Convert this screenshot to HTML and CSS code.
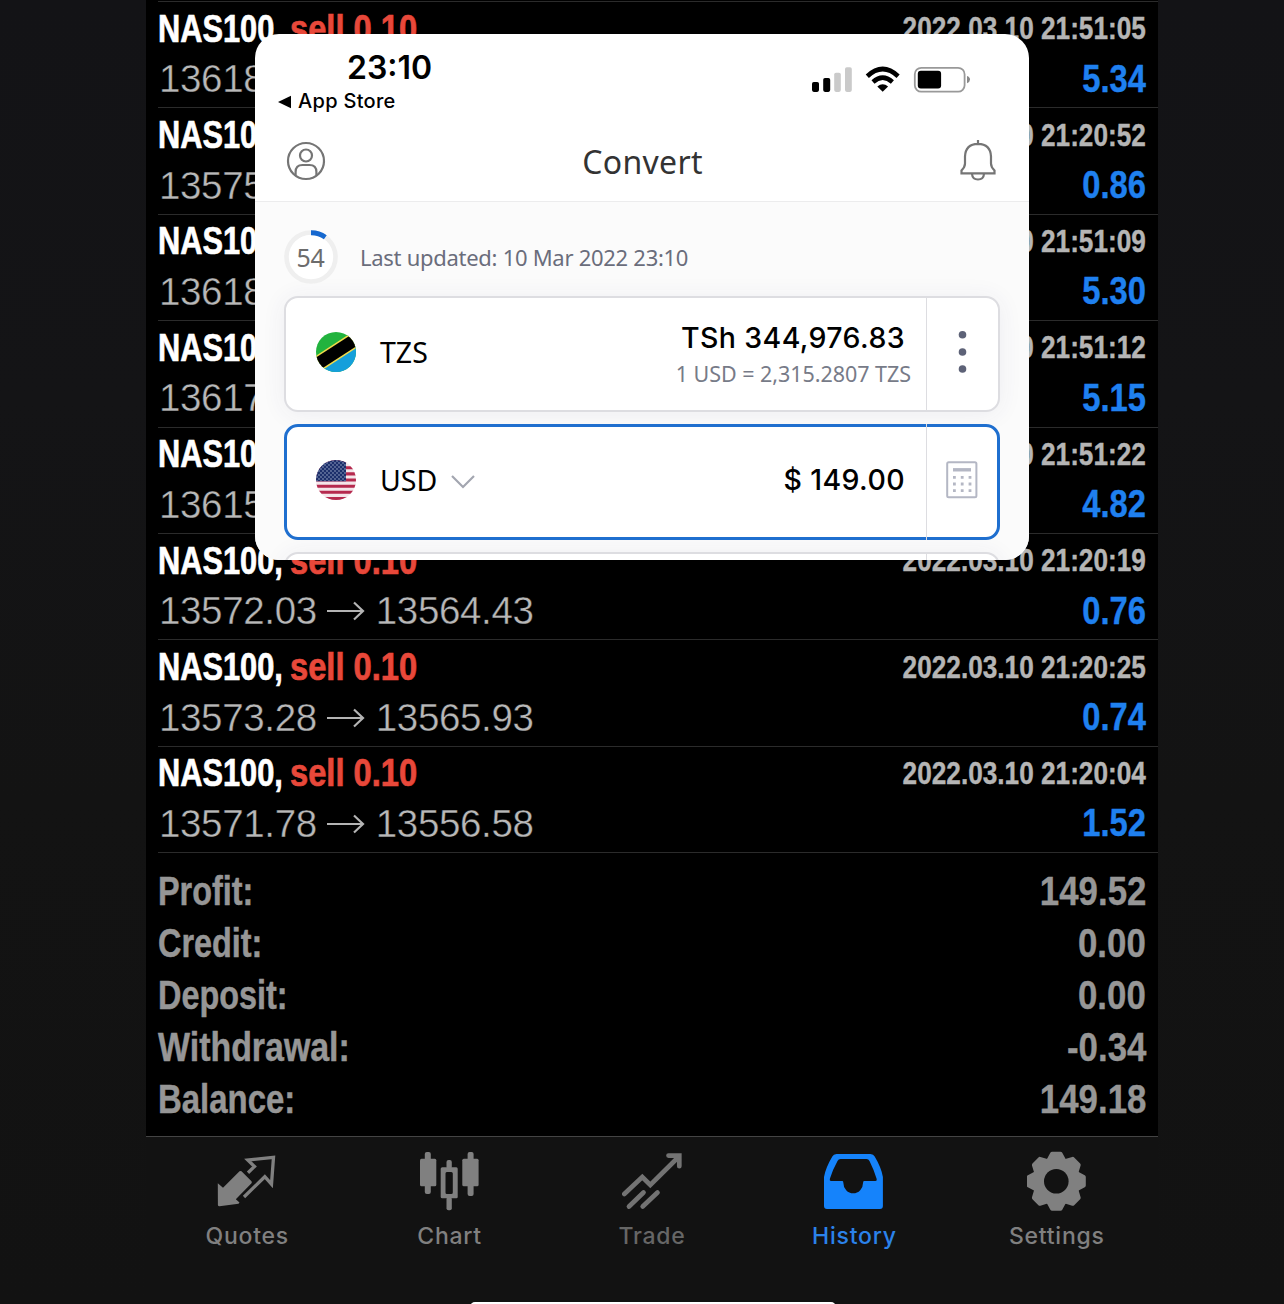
FILE: index.html
```html
<!DOCTYPE html>
<html lang="en">
<head>
<meta charset="utf-8">
<title>History</title>
<link rel="stylesheet" href="styles.css">
</head>
<body>
<svg width="0" height="0" class="defs">
  <symbol id="arrow" viewBox="0 0 38 20"><path d="M0 10H36M27 1.500L36 10L27 18.500" fill="none" stroke="#b4b4b4" stroke-width="2.200"/></symbol>
</svg>
<div class="phone">
  <main class="history">
    <div class="deal"><div class="line"><span class="title"><b class="symbol">NAS100,</b><b class="side-sell">sell 0.10</b></span><span class="time">2022.03.10 21:51:05</span></div><div class="line"><span class="price">13618</span><span class="profit">5.34</span></div></div>
    <div class="deal"><div class="line"><span class="title"><b class="symbol">NAS100,</b><b class="side-sell">sell 0.10</b></span><span class="time">2022.03.10 21:20:52</span></div><div class="line"><span class="price">13575</span><span class="profit">0.86</span></div></div>
    <div class="deal"><div class="line"><span class="title"><b class="symbol">NAS100,</b><b class="side-sell">sell 0.10</b></span><span class="time">2022.03.10 21:51:09</span></div><div class="line"><span class="price">13618</span><span class="profit">5.30</span></div></div>
    <div class="deal"><div class="line"><span class="title"><b class="symbol">NAS100,</b><b class="side-sell">sell 0.10</b></span><span class="time">2022.03.10 21:51:12</span></div><div class="line"><span class="price">13617</span><span class="profit">5.15</span></div></div>
    <div class="deal"><div class="line"><span class="title"><b class="symbol">NAS100,</b><b class="side-sell">sell 0.10</b></span><span class="time">2022.03.10 21:51:22</span></div><div class="line"><span class="price">13615</span><span class="profit">4.82</span></div></div>
    <div class="deal"><div class="line"><span class="title"><b class="symbol">NAS100,</b><b class="side-sell">sell 0.10</b></span><span class="time">2022.03.10 21:20:19</span></div><div class="line"><span class="price">13572.03<svg class="arrow"><use href="#arrow"/></svg>13564.43</span><span class="profit">0.76</span></div></div>
    <div class="deal"><div class="line"><span class="title"><b class="symbol">NAS100,</b><b class="side-sell">sell 0.10</b></span><span class="time">2022.03.10 21:20:25</span></div><div class="line"><span class="price">13573.28<svg class="arrow"><use href="#arrow"/></svg>13565.93</span><span class="profit">0.74</span></div></div>
    <div class="deal"><div class="line"><span class="title"><b class="symbol">NAS100,</b><b class="side-sell">sell 0.10</b></span><span class="time">2022.03.10 21:20:04</span></div><div class="line"><span class="price">13571.78<svg class="arrow"><use href="#arrow"/></svg>13556.58</span><span class="profit">1.52</span></div></div>
    <div class="summary">
      <div class="total"><span class="label short">Profit:</span><span class="value">149.52</span></div>
      <div class="total"><span class="label short">Credit:</span><span class="value">0.00</span></div>
      <div class="total"><span class="label short">Deposit:</span><span class="value">0.00</span></div>
      <div class="total"><span class="label long">Withdrawal:</span><span class="value">-0.34</span></div>
      <div class="total"><span class="label">Balance:</span><span class="value">149.18</span></div>
    </div>
  </main>
  <nav class="tabs">
    <div class="tab"><svg class="icon" viewBox="0 0 60 60"><path d="M.8 32.300L6 36.700L22.500 20.300Q23.500 19.500 24.500 20.300L34.500 30.300Q35.200 31.300 34.500 32.200L18.800 48.300L22.500 51.500L21.500 52.800L2.500 55.200Q1 55.200.9 54Z" fill="#808080"/><path d="M31 21.700L37.500 15.500L30.800 9L56.500 6.300L54.500 33.200L47.800 25.700L27 46" fill="none" stroke="#808080" stroke-width="3.300"/></svg><span>Quotes</span></div>
    <div class="tab"><svg class="icon" viewBox=".7 0 60 60" fill="#808080"><rect x=".7" y="7.700" width="16.300" height="27.500" rx="1.500"/><rect x="5.500" y="1" width="6" height="42" rx="2"/><path fill-rule="evenodd" d="M23 16.300H37Q38.400 16.300 38.400 17.800V46Q38.400 47.300 37 47.300H23Q21.400 47.300 21.400 46V17.800Q21.400 16.300 23 16.300ZM27.500 21Q26.200 21 26.200 22.500V41.500Q26.200 43 27.500 43H32Q33.500 43 33.500 41.500V22.500Q33.500 21 32 21Z"/><rect x="27.200" y="9" width="5.300" height="9" rx="2"/><rect x="27.200" y="46" width="5.300" height="13.300" rx="2"/><rect x="43" y="7.700" width="16.300" height="27.500" rx="1.500"/><rect x="48.300" y="1" width="6" height="44" rx="2"/></svg><span>Chart</span></div>
    <div class="tab"><svg class="icon" viewBox="0 0 60 60" fill="none" stroke="#737373" stroke-width="4.700" stroke-linecap="round"><path d="M2.300 43L20.300 26L28.300 34L57 5.500M46.500 4.600H57.300V15.200"/><path d="M7 55.500L21.500 41.500M20.700 55.500L35.500 41.500"/></svg><span class="dim">Trade</span></div>
    <div class="tab"><svg class="icon" viewBox="0 0 60 60"><path fill="#1583fb" fill-rule="evenodd" d="M12.500 3H46.500Q49.500 3 50.700 5.500Q57.500 17 58.900 26V55Q58.900 58 55.900 58H3Q0 58 0 55V26Q1.500 17 8.300 5.500Q9.500 3 12.500 3ZM16.500 8Q14.500 8 13.500 10Q8.500 19 5.800 28Q5.400 30 7 30H18.500Q19.300 30 19.300 31.500A9.900 10.800 0 0 0 39.100 31.500Q39.100 30 40 30H51.500Q53.200 30 52.700 28Q50 19 45.500 10Q44.500 8 42.500 8Z"/></svg><span class="on">History</span></div>
    <div class="tab"><svg class="icon" viewBox="0 0 60 60"><g transform="translate(29.300 30.300)" fill="#808080" stroke="#808080" stroke-width="4" stroke-linejoin="round"><circle r="22"/><path id="t" d="M-8.500-19.500L-4.200-27.500H4.200L8.500-19.500L8.500 19.500L4.200 27.500H-4.200L-8.500 19.500Z"/><use href="#t" transform="rotate(45)"/><use href="#t" transform="rotate(90)"/><use href="#t" transform="rotate(135)"/><circle r="12.300" fill="#121212" stroke="none"/></g></svg><span>Settings</span></div>
  </nav>
  <div class="home"></div>

  <section class="card">
    <header class="status">
      <div class="clock"><div class="hour">23:10</div><div class="back"><svg width="13" height="14" viewBox="0 0 13 14"><path d="M0 7L13 .8V13.200Z"/></svg>App Store</div></div>
      <svg class="signals" width="160" height="28" viewBox="812 66 160 28">
        <g><rect x="812" y="82" width="7" height="9.900" rx="1.800"/><rect x="823.200" y="78" width="7" height="13.900" rx="1.800"/><g fill="#cacaca"><rect x="834.200" y="72.700" width="6.600" height="19.200" rx="1.800"/><rect x="845" y="67.300" width="6.800" height="24.600" rx="1.800"/></g></g>
        <path d="M882.700 91.800L877.300 86.400Q882.700 82.200 888.100 86.400Z"/>
        <g fill="none" stroke="#000" stroke-width="4.600"><path d="M867.300 76.200Q882.700 61.800 898.100 76.200"/><path d="M873 82Q882.700 73.400 892.400 82"/></g>
        <rect x="914.800" y="67.800" width="49.800" height="23.900" rx="6.500" fill="none" stroke="#999" stroke-width="1.800"/><rect x="917.800" y="70.800" width="23.300" height="17.800" rx="3"/><path d="M967 76Q970 77 970 79.500T967 83.200Z" fill="#888"/>
      </svg>
    </header>
    <div class="bar">
      <svg width="40" height="40" viewBox="0 0 40 40" fill="none" stroke="#757575" stroke-width="2.200"><circle cx="20" cy="20" r="18"/><circle cx="20" cy="14.500" r="6"/><path d="M9.600 34.500V31Q9.600 24 16.500 24H23.500Q30.400 24 30.400 31V34.500"/></svg>
      <h1>Convert</h1>
      <svg width="38" height="42" viewBox="0 0 38 42" fill="none" stroke="#757575" stroke-width="2.200"><path d="M19 0V4M2.500 33.400V30.500Q6 27 6 23.500V16.500Q6.500 4 19 3.800Q31.500 4 32 16.500V23.500Q32 27 35.500 30.500V33.400ZM13 34Q13.500 39.500 19 39.500T25 34"/></svg>
    </div>
    <div class="body">
      <div class="updated">
        <svg width="54" height="54" viewBox="0 0 54 54"><circle cx="27" cy="27" r="24.500" fill="#fff" stroke="#efefef" stroke-width="4.600"/><path d="M27 2.800A24.300 24.300 0 0 1 41.300 7.200" fill="none" stroke="#1668cf" stroke-width="5"/><text x="26.500" y="37" class="sec">54</text></svg>
        <span>Last updated: 10 Mar 2022 23:10</span>
      </div>
      <div class="currency">
        <svg class="flag" viewBox="-20 -20 40 40"><clipPath id="c"><circle r="20"/></clipPath><g clip-path="url(#c)"><path d="M-20-20H20V20H-20Z" fill="#22b33e"/><g transform="rotate(-33)"><path d="M-30 0H30V30H-30Z" fill="#159fdb"/><path d="M-30-7.800H30V7.800H-30Z" fill="#f0da4a"/><path d="M-30-6.200H30V6.200H-30Z" fill="#000"/></g></g></svg>
        <span class="code">TZS</span>
        <div class="amounts"><div class="amount">TSh 344,976.83</div><div class="rate">1 USD = 2,315.2807 TZS</div></div>
        <div class="side"><svg width="10" height="42" viewBox="0 0 10 42" fill="#5d6277"><circle cx="4.500" cy="3.800" r="3.800"/><circle cx="4.500" cy="21" r="3.800"/><circle cx="4.500" cy="38" r="3.800"/></svg></div>
      </div>
      <div class="currency active">
        <svg class="flag" viewBox="0 0 40 40"><defs><clipPath id="u"><circle cx="20" cy="20" r="20"/></clipPath><pattern id="s" width="4" height="4" patternUnits="userSpaceOnUse"><circle cx="1" cy="1" r=".65" fill="#b9c3dc"/><circle cx="3" cy="3" r=".65" fill="#b9c3dc"/></pattern></defs><g clip-path="url(#u)"><path d="M0 0H40V40H0Z" fill="#f4e6ea"/><path d="M0 1.500H40M0 7.700H40M0 13.900H40M0 20H40M0 26.200H40M0 32.300H40M0 38.500H40" stroke="#b5294e" stroke-width="3.080"/><path d="M0 0H30V21.300H0Z" fill="#1c2f6b"/><path d="M0 0H30V21.300H0Z" fill="url(#s)"/></g></svg>
        <span class="code">USD</span>
        <svg class="chevron" width="24" height="14" viewBox="0 0 24 14"><path d="M1 1L12 12L23 1" fill="none" stroke="#a3a6b0" stroke-width="2.200"/></svg>
        <div class="amounts"><div class="amount usd">$ 149.00</div></div>
        <div class="side"><svg width="32" height="38" viewBox="0 0 32 38"><rect x="1.200" y="1.200" width="29.200" height="35" rx="1.500" fill="none" stroke="#b4b7c4" stroke-width="2"/><path d="M7 8.800H25" stroke="#b4b7c4" stroke-width="3.400"/><path d="M7 16.300H25.500M7 23H25.500M7 29.700H25.500" stroke="#b4b7c4" stroke-width="2.800" stroke-dasharray="2.800 5"/></svg></div>
      </div>
      <div class="currency"><div class="amounts"></div><div class="side"></div></div>
    </div>
  </section>
</div>
</body>
</html>
```
FILE: styles.css
```css
* { box-sizing: border-box; }
body {
  margin: 0;
  height: 1304px;
  overflow: hidden;
  background: linear-gradient(#131316 0, #141416 400px, #131313 800px, #121212 1304px);
  font-family: "Liberation Sans", Arial, sans-serif;
}
.defs { position: absolute; }
.phone { position: relative; width: 1012px; height: 1304px; margin-left: 146px; overflow: hidden; }

.history { height: 1137px; padding: 1px 0 0 12px; background: #000; border-bottom: 1px solid #444; }
.deal { height: 106.4px; padding: 2.200px 12px 0 0; border-top: 1px solid #2b2b2b; white-space: nowrap; }
.line { display: flex; justify-content: space-between; align-items: center; height: 50px; }
.symbol, .side-sell, .label { display: inline-block; transform-origin: left; font-weight: bold; }
.time, .profit, .value { transform-origin: right; font-weight: bold; -webkit-text-stroke: .4px; }
.title { display: flex; font-size: 38px; -webkit-text-stroke: .7px; }
.symbol { width: 132px; color: #fff; transform: scaleX(.81); }
.side-sell { color: #e8483a; transform: scaleX(.86); }
.time { color: #b5b5b5; font-size: 31px; transform: scaleX(.845); }
.price { display: flex; align-items: center; padding-left: 1px; color: #b8b8b8; font-size: 38.500px; letter-spacing: -.35px; -webkit-text-stroke: .4px #000; }
.arrow { width: 38px; height: 20px; margin: 0 11px 0 10px; }
.profit { color: #1f80f0; font-size: 38px; transform: scaleX(.86); }
.summary { padding: 12.500px 12px 0 0; border-top: 1px solid #2b2b2b; }
.total { display: flex; justify-content: space-between; align-items: center; height: 52px; color: #969696; font-size: 41px; }
.label { transform: scaleX(.803); -webkit-text-stroke: .5px; }
.label.short { transform: scaleX(.79); }
.label.long { transform: scaleX(.827); }
.value { transform: scaleX(.85); }

.tabs { display: grid; grid-template-columns: repeat(5, 1fr); height: 167px; padding-top: 14px; background: #121212; }
.tab { display: flex; flex-direction: column; align-items: center; color: #808080; font: 500 23px/28px Inter, sans-serif; letter-spacing: .75px; }
.icon { width: 60px; height: 60px; margin-bottom: 11px; }
.dim { color: #666; }
.on { color: #2b82ea; }
.home { position: absolute; left: 324px; top: 1302px; width: 366px; height: 10px; border-radius: 5px; background: #fff; }

.card { position: absolute; left: 109px; top: 34px; width: 774px; height: 526px; border-radius: 24px; overflow: hidden; background: #fff; color: #000; }
.status { display: flex; justify-content: space-between; height: 84px; padding: 15px 57px 0 23px; }
.hour { margin-left: 69px; font: 600 32px/37px Inter, sans-serif; }
.back { display: flex; align-items: center; gap: 7px; font: 500 20px/31px Inter, sans-serif; letter-spacing: .3px; }
.signals { margin-top: 17px; }
.bar { display: flex; justify-content: space-between; align-items: center; height: 84px; padding: 2px 32px 0 31px; border-bottom: 1.500px solid #ececed; }
h1 { margin: 0; padding-top: 3px; font: 400 32px/40px "Noto Sans", sans-serif; letter-spacing: .3px; color: #333; }
.body { height: 358px; padding: 28px 29px 0; background: #fbfbfb; }
.updated { display: flex; align-items: center; gap: 22px; height: 66px; padding-bottom: 12px; color: #6a6d7b; font: 400 22px/30px "Noto Sans", sans-serif; letter-spacing: -.28px; }
.sec { font: 400 25px "Noto Sans", sans-serif; fill: #6c6c6c; text-anchor: middle; }
.currency { display: flex; align-items: center; height: 116px; margin-bottom: 12px; padding-left: 30px; border: 2px solid #dddde1; border-radius: 14px; background: #fff; box-shadow: 0 2px 24px rgba(60, 60, 110, .07); }
.active { position: relative; border: 3.500px solid #1f6fcf; padding-left: 29px; box-shadow: none; }
.flag { width: 40px; height: 40px; margin: 0 24px 4px 0; }
.code { margin-bottom: 4px; font: 400 28.500px/36px "Noto Sans", sans-serif; }
.chevron { margin-left: 14px; }
.amounts { flex: 1; text-align: right; padding-right: 15px; }
.amount { margin: 2px 6px 0 0; font: 500 28.500px/38px Inter, sans-serif; letter-spacing: .4px; }
.usd { margin: 0 6px 4px 0; }
.rate { color: #777b88; font: 400 21.500px/34px "Noto Sans", sans-serif; letter-spacing: -.04px; }
.side { display: flex; align-items: center; justify-content: center; align-self: stretch; width: 72px; padding-bottom: 4px; border-left: 1.500px solid #dddde1; }
.active .side { width: 71px; margin: -3px 0; }
```
